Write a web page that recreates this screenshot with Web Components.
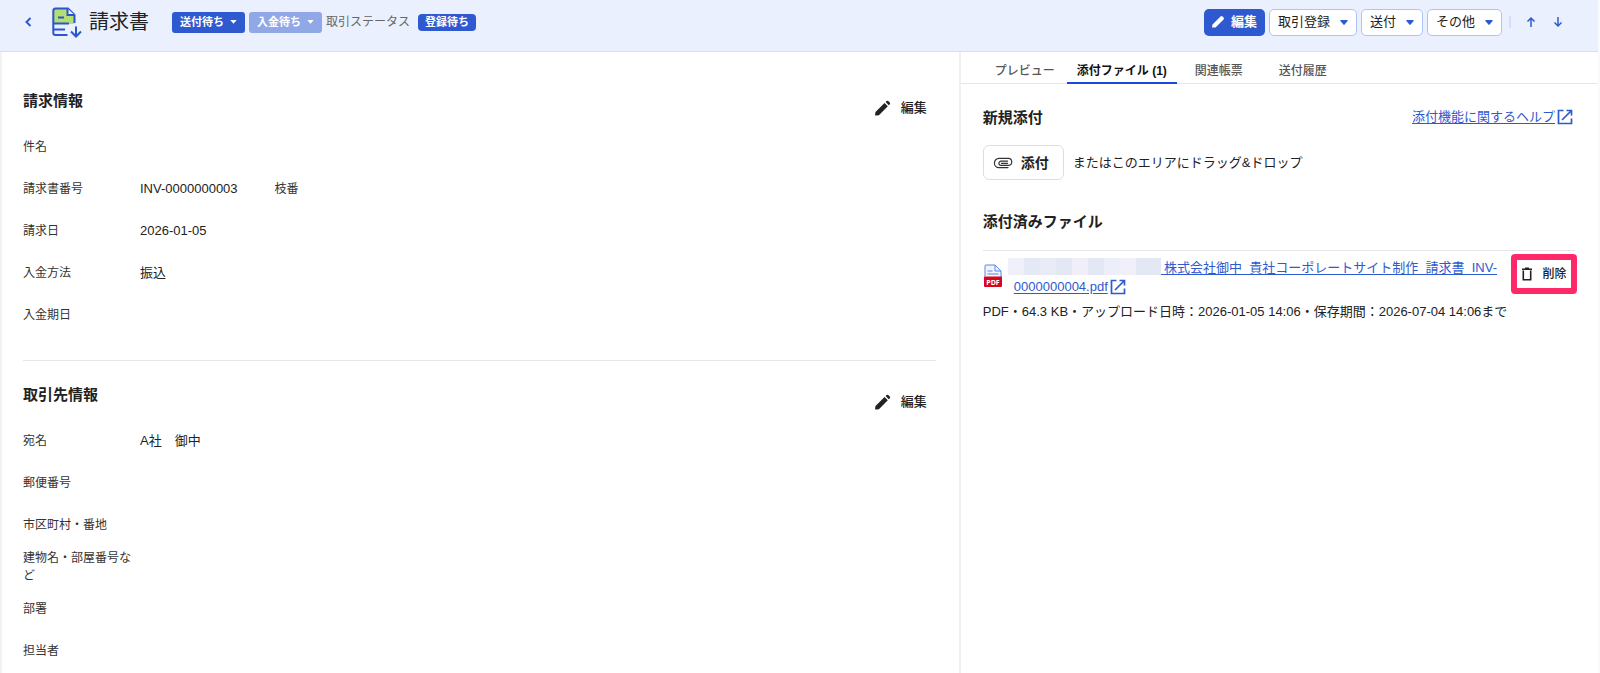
<!DOCTYPE html>
<html lang="ja">
<head>
<meta charset="utf-8">
<title>請求書</title>
<style>
  html, body {
    margin: 0;
    min-height: 100%;
  }
  body {
    --blue: #2f59cf;
    --line: #e6e6e8;
    background: #fff;
    color: #222;
    font-family: "Liberation Sans", "Noto Sans CJK JP", sans-serif;
    font-size: 13px;
    line-height: 18px;
  }
</style>
</head>
<body>
<invoice-page></invoice-page>

<script>
const icons = {
  back: '<svg width="12" height="12" viewBox="0 0 12 12" fill="none" stroke="currentColor" stroke-width="2"><path d="M8.500 2 4.500 6l4 4"/></svg>',
  up: '<svg width="12" height="12" viewBox="0 0 12 12" fill="none" stroke="currentColor" stroke-width="1.5"><path d="M6 11V2M2.500 5.500 6 2l3.500 3.500"/></svg>',
  down: '<svg width="12" height="12" viewBox="0 0 12 12" fill="none" stroke="currentColor" stroke-width="1.5"><path d="M6 1v9M2.500 6.500 6 10l3.500-3.500"/></svg>',
  caret: '<svg width="8" height="5" viewBox="0 0 8 5" fill="currentColor"><path d="M.8 0h6.400q.9.200.4 1L4.600 4.600q-.6.600-1.200 0L.4 1Q-.1.200.8 0z"/></svg>',
  smallCaret: '<svg width="7" height="4" viewBox="0 0 7 4" fill="currentColor"><path d="M.3 0h6.400L3.500 3.700z"/></svg>',
  pen: '<svg width="12" height="12" viewBox="0 0 12 12" fill="currentColor"><path d="M.6 11.500q-.7-.1-.5-.9L.5 8.500 8.300.7q1.300-1.200 2.500 0l.5.500q1.200 1.200 0 2.500L3.500 11.400z"/></svg>',
  pencil: '<svg width="18" height="18" viewBox="0 0 18 18" fill="currentColor"><path d="M1.500 16.500q-.5-.2-.4-1l.4-2.500 9-9 3.300 3.300-8.900 8.900-2.500.4zM11.600 3l1-1q.8-.7 1.600 0l1.600 1.600q.7.800 0 1.600l-1 1z"/></svg>',
  clip: '<svg width="20" height="12" viewBox="0 0 20 12" fill="none" stroke="#333" stroke-width="1.2" stroke-linecap="round"><path d="M15.500 8.400H8a2.100 2.100 0 0 1 0-4.200h6.500M14.500 6.300H8.500M15.500 8.400a3.500 3.500 0 0 0-.5-7H6a4.600 4.600 0 0 0 0 9.200h9"/></svg>',
  external: '<svg width="16" height="16" viewBox="0 0 16 16" fill="none" stroke="currentColor" stroke-width="1.700"><path d="M6.500 1.500h-5v13h13v-5M9.500 1.500h5v5M14 2 5 11"/></svg>',
  trash: '<svg width="12" height="14" viewBox="0 0 12 14" fill="none" stroke="currentColor" stroke-width="1.600"><path d="M2.300 3.500v9.300h7.400V3.500M1 2.300h10M4 1.200h4"/></svg>',
  doc: '<svg width="30" height="32" viewBox="0 0 30 32" fill="none" stroke="#2a55cf" stroke-width="2"><path d="M2 2h14l6 6v9H2z" fill="#b4dd72" stroke="none"/><path d="M15.500 28H3.500Q1.300 28 1.300 26V4q0-2.500 2.200-2.500H16L22.500 8v8"/><path d="M15.500 1.500V8h7" fill="#eaf0fe"/><path d="M6 10.500h6M2 16.500h15M2 22.500h11M24 19.500V29M19 24.500l5 5 5-5"/></svg>',
  pdf: '<svg width="20" height="24" viewBox="0 0 20 24"><path d="M2 12V2q0-1 1-1h9l6 6v6" fill="#f1f5ff" stroke="#5c86e8"/><path d="M12 1v6h6M4.500 7h5M4.500 10h11" fill="none" stroke="#5c86e8"/><path d="M1 12.500h18V22q0 1-1 1H2q-1 0-1-1z" fill="#d7061c"/><text x="10" y="20.500" text-anchor="middle" font-family="Open Sans, sans-serif" font-size="7" font-weight="700" fill="#fff">PDF</text></svg>'
};

const reset = `
  * { box-sizing: border-box; }
  svg { display: block; flex: none; }
  button, select {
    margin: 0;
    font: inherit;
    color: inherit;
    background: none;
    border: 0;
    padding: 0;
    cursor: pointer;
  }
`;

class StatusSelect extends HTMLElement {
  constructor() {
    super();
    const value = this.getAttribute('value');
    this.attachShadow({mode: 'open'}).innerHTML = `
      <style>${reset}
        :host { display: grid; align-items: center; color: #fff; }
        select {
          grid-area: 1 / 1;
          appearance: none;
          height: 21px;
          padding: 0 21px 0 8px;
          border-radius: 3px;
          background: var(--blue);
          font-size: 11px;
          font-weight: 700;
          line-height: 21px;
        }
        :host([muted]) select { background: #91a8e6; }
        svg { grid-area: 1 / 1; justify-self: end; margin-right: 8px; pointer-events: none; }
      </style>
      <select aria-label="${this.getAttribute('label')}"><option>${value}</option></select>
      ${icons.smallCaret}`;
  }
}
customElements.define('status-select', StatusSelect);

class MenuButton extends HTMLElement {
  constructor() {
    super();
    this.attachShadow({mode: 'open'}).innerHTML = `
      <style>${reset}
        :host { display: block; }
        button {
          display: flex;
          align-items: center;
          gap: 10px;
          height: 27px;
          padding: 0 8px;
          border: 1px solid #adc4f8;
          border-radius: 5px;
          background: #fff;
          white-space: nowrap;
        }
        svg { color: var(--blue); }
      </style>
      <button type="button" aria-haspopup="menu"><slot></slot>${icons.caret}</button>`;
  }
}
customElements.define('menu-button', MenuButton);

class InvoiceHeader extends HTMLElement {
  constructor() {
    super();
    this.attachShadow({mode: 'open'}).innerHTML = `
      <style>${reset}
        :host {
          display: flex;
          align-items: flex-start;
          justify-content: space-between;
          height: 52px;
          padding: 8px 34px 0 22px;
          background: #eaf0fe;
          border-bottom: 1px solid #dcdfe8;
        }
        .group { display: flex; align-items: center; height: 28px; }
        .back, .arrow { color: var(--blue); }
        .doc { margin: 2px 7px 0 18px; }
        h1 { margin: 0 23px 0 0; font-size: 20px; font-weight: 400; line-height: 28px; }
        .statuses { display: flex; align-items: center; gap: 4px; }
        .label { color: #666; font-size: 12px; }
        .badge {
          margin-left: 4px;
          padding: 0 7px;
          border-radius: 4px;
          background: var(--blue);
          color: #fff;
          font-size: 11px;
          font-weight: 700;
          line-height: 17px;
        }
        .actions { gap: 4px; }
        .edit {
          display: flex;
          align-items: center;
          gap: 7px;
          height: 27px;
          padding: 0 8px;
          border-radius: 5px;
          background: var(--blue);
          color: #fff;
          font-size: 13px;
          font-weight: 700;
        }
        .pager {
          display: flex;
          gap: 15px;
          margin-left: 3px;
          padding-left: 14px;
          border-left: 2px solid #d3e0fd;
        }
      </style>
      <div class="group">
        <button class="back" type="button" aria-label="戻る">${icons.back}</button>
        <div class="doc">${icons.doc}</div>
        <h1>請求書</h1>
        <div class="statuses">
          <status-select value="送付待ち" label="送付ステータス"></status-select>
          <status-select value="入金待ち" label="入金ステータス" muted></status-select>
          <span class="label">取引ステータス</span>
          <span class="badge">登録待ち</span>
        </div>
      </div>
      <div class="group actions">
        <button class="edit" type="button">${icons.pen}編集</button>
        <menu-button>取引登録</menu-button>
        <menu-button>送付</menu-button>
        <menu-button>その他</menu-button>
        <div class="pager">
          <button class="arrow" type="button" aria-label="前へ">${icons.up}</button>
          <button class="arrow" type="button" aria-label="次へ">${icons.down}</button>
        </div>
      </div>`;
  }
}
customElements.define('invoice-header', InvoiceHeader);

class InfoSection extends HTMLElement {
  constructor() {
    super();
    this.attachShadow({mode: 'open'}).innerHTML = `
      <style>${reset}
        :host { display: block; padding: 24px 0; }
        :host([divided]) { border-bottom: 1px solid var(--line); }
        header {
          display: flex;
          align-items: flex-start;
          justify-content: space-between;
          height: 35px;
        }
        h2 { margin: 0; font-size: 15px; font-weight: 700; line-height: 20px; }
        button {
          display: flex;
          align-items: center;
          gap: 9px;
          margin-top: 7px;
          padding-right: 9px;
          font-size: 13px;
          font-weight: 500;
          line-height: 20px;
        }
      </style>
      <header>
        <h2>${this.getAttribute('heading')}</h2>
        <button type="button">${icons.pencil}編集</button>
      </header>
      <slot></slot>`;
  }
}
customElements.define('info-section', InfoSection);

class InfoRow extends HTMLElement {
  constructor() {
    super();
    this.attachShadow({mode: 'open'}).innerHTML = `
      <style>${reset}
        :host {
          display: grid;
          grid-template-columns: 108px auto 1fr;
          column-gap: 9px;
          align-items: center;
          min-height: 42px;
        }
        .label, ::slotted([slot="sub"]) { color: #333; font-size: 12px; }
        ::slotted([slot="sub"]) { margin-left: 28px; }
      </style>
      <span class="label">${this.getAttribute('label')}</span>
      <span><slot></slot></span>
      <slot name="sub"></slot>`;
  }
}
customElements.define('info-row', InfoRow);

class TabBar extends HTMLElement {
  constructor() {
    super();
    const tabs = this.getAttribute('tabs').split(',');
    const active = Number(this.getAttribute('active'));
    this.attachShadow({mode: 'open'}).innerHTML = `
      <style>${reset}
        :host { display: flex; padding-left: 22px; border-bottom: 1px solid var(--line); }
        button {
          min-width: 84px;
          height: 32px;
          margin-bottom: -1px;
          padding: 8px 10px 0;
          border-bottom: 2px solid transparent;
          color: #555;
          font-size: 12px;
          font-weight: 500;
          white-space: nowrap;
        }
        button[aria-selected="true"] { border-color: #1a49df; color: #111; font-weight: 700; }
      </style>
      ${tabs.map((tab, i) => `<button type="button" role="tab" aria-selected="${i === active}">${tab}</button>`).join('')}`;
    this.setAttribute('role', 'tablist');
  }
}
customElements.define('tab-bar', TabBar);

class AttachedFile extends HTMLElement {
  constructor() {
    super();
    this.attachShadow({mode: 'open'}).innerHTML = `
      <style>${reset}
        :host { display: block; padding-top: 3px; border-top: 1px solid var(--line); }
        .file { display: flex; align-items: flex-start; gap: 5px; margin-right: -2px; }
        .pdf { margin-top: 10px; }
        .name { flex: 1; padding: 4px 0 0 6px; }
        a { color: var(--blue); line-height: 19px; text-underline-offset: 2px; }
        /* company name is hidden behind flat tiles */
        .masked {
          display: inline-block;
          position: relative;
          width: 153px;
          height: 17px;
          margin: 0 -4px 0 -6px;
          vertical-align: top;
          background: linear-gradient(90deg, #f0f0fa 16px, #e5e8f5 16px 32px, #e9ebf7 32px 48px, #e4e7f4 48px 64px, #f0eff9 64px 80px, #e4e8f5 80px 96px, #eceefa 96px 112px, #f0effa 112px 128px, #e4e7f4 128px);
        }
        a svg { display: inline-block; margin-left: 2px; vertical-align: -4px; }
        .delete {
          display: flex;
          align-items: center;
          justify-content: center;
          gap: 9px;
          width: 66px;
          height: 40px;
          border: 6px solid #ff2868;
          border-radius: 4px;
          font-size: 12px;
          font-weight: 500;
          white-space: nowrap;
        }
        p { margin: 7px 0 0; }
      </style>
      <div class="file">
        <div class="pdf">${icons.pdf}</div>
        <div class="name">
          <a href="#"><span class="masked"></span>_株式会社御中_貴社コーポレートサイト制作_請求書_INV-<wbr>0000000004.pdf${icons.external}</a>
        </div>
        <button class="delete" type="button">${icons.trash}削除</button>
      </div>
      <p><slot></slot></p>`;
  }
}
customElements.define('attached-file', AttachedFile);

class AttachPanel extends HTMLElement {
  constructor() {
    super();
    this.attachShadow({mode: 'open'}).innerHTML = `
      <style>${reset}
        :host { display: block; }
        .content { padding: 24px 23px 0 22px; }
        .top { display: flex; align-items: flex-start; justify-content: space-between; padding-right: 2px; }
        h2 { margin: 0; font-size: 15px; font-weight: 700; line-height: 20px; }
        a {
          display: flex;
          align-items: center;
          gap: 2px;
          color: var(--blue);
          text-underline-offset: 2px;
        }
        .drop { display: flex; align-items: center; gap: 9px; margin: 17px 0 32px; }
        .drop button {
          display: flex;
          align-items: center;
          gap: 8px;
          height: 35px;
          padding: 0 14px 0 9px;
          border: 1px solid #dedee0;
          border-radius: 6px;
          font-size: 14px;
          font-weight: 700;
        }
        attached-file { margin-top: 18px; }
      </style>
      <tab-bar tabs="プレビュー,添付ファイル (1),関連帳票,送付履歴" active="1"></tab-bar>
      <div class="content">
        <div class="top">
          <h2>新規添付</h2>
          <a href="#"><span>添付機能に関するヘルプ</span>${icons.external}</a>
        </div>
        <div class="drop">
          <button type="button">${icons.clip}添付</button>
          <span>またはこのエリアにドラッグ&amp;ドロップ</span>
        </div>
        <h2>添付済みファイル</h2>
        <attached-file>PDF・64.3 KB・アップロード日時：2026-01-05 14:06・保存期間：2026-07-04 14:06まで</attached-file>
      </div>`;
  }
}
customElements.define('attach-panel', AttachPanel);

class InvoicePage extends HTMLElement {
  constructor() {
    super();
    this.attachShadow({mode: 'open'}).innerHTML = `
      <style>${reset}
        :host {
          display: flex;
          flex-direction: column;
          height: 100vh;
          overflow: hidden;
          border-right: 2px solid #fafafc;
        }
        main { display: grid; grid-template-columns: 3fr 2fr; flex: 1; min-height: 0; }
        .info { padding: 14px 23px 0 23px; box-shadow: inset 3px 0 3px -2px #e8e8ec; }
        .info info-section:first-child { padding-top: 25px; }
        attach-panel { border-left: 2px solid #f0f0f2; }
      </style>
      <invoice-header></invoice-header>
      <main>
        <div class="info">
          <info-section heading="請求情報" divided>
            <info-row label="件名"></info-row>
            <info-row label="請求書番号">INV-0000000003<span slot="sub">枝番</span></info-row>
            <info-row label="請求日">2026-01-05</info-row>
            <info-row label="入金方法">振込</info-row>
            <info-row label="入金期日"></info-row>
          </info-section>
          <info-section heading="取引先情報">
            <info-row label="宛名">A社　御中</info-row>
            <info-row label="郵便番号"></info-row>
            <info-row label="市区町村・番地"></info-row>
            <info-row label="建物名・部屋番号など"></info-row>
            <info-row label="部署"></info-row>
            <info-row label="担当者"></info-row>
          </info-section>
        </div>
        <attach-panel></attach-panel>
      </main>`;
  }
}
customElements.define('invoice-page', InvoicePage);
</script>
</body>
</html>
